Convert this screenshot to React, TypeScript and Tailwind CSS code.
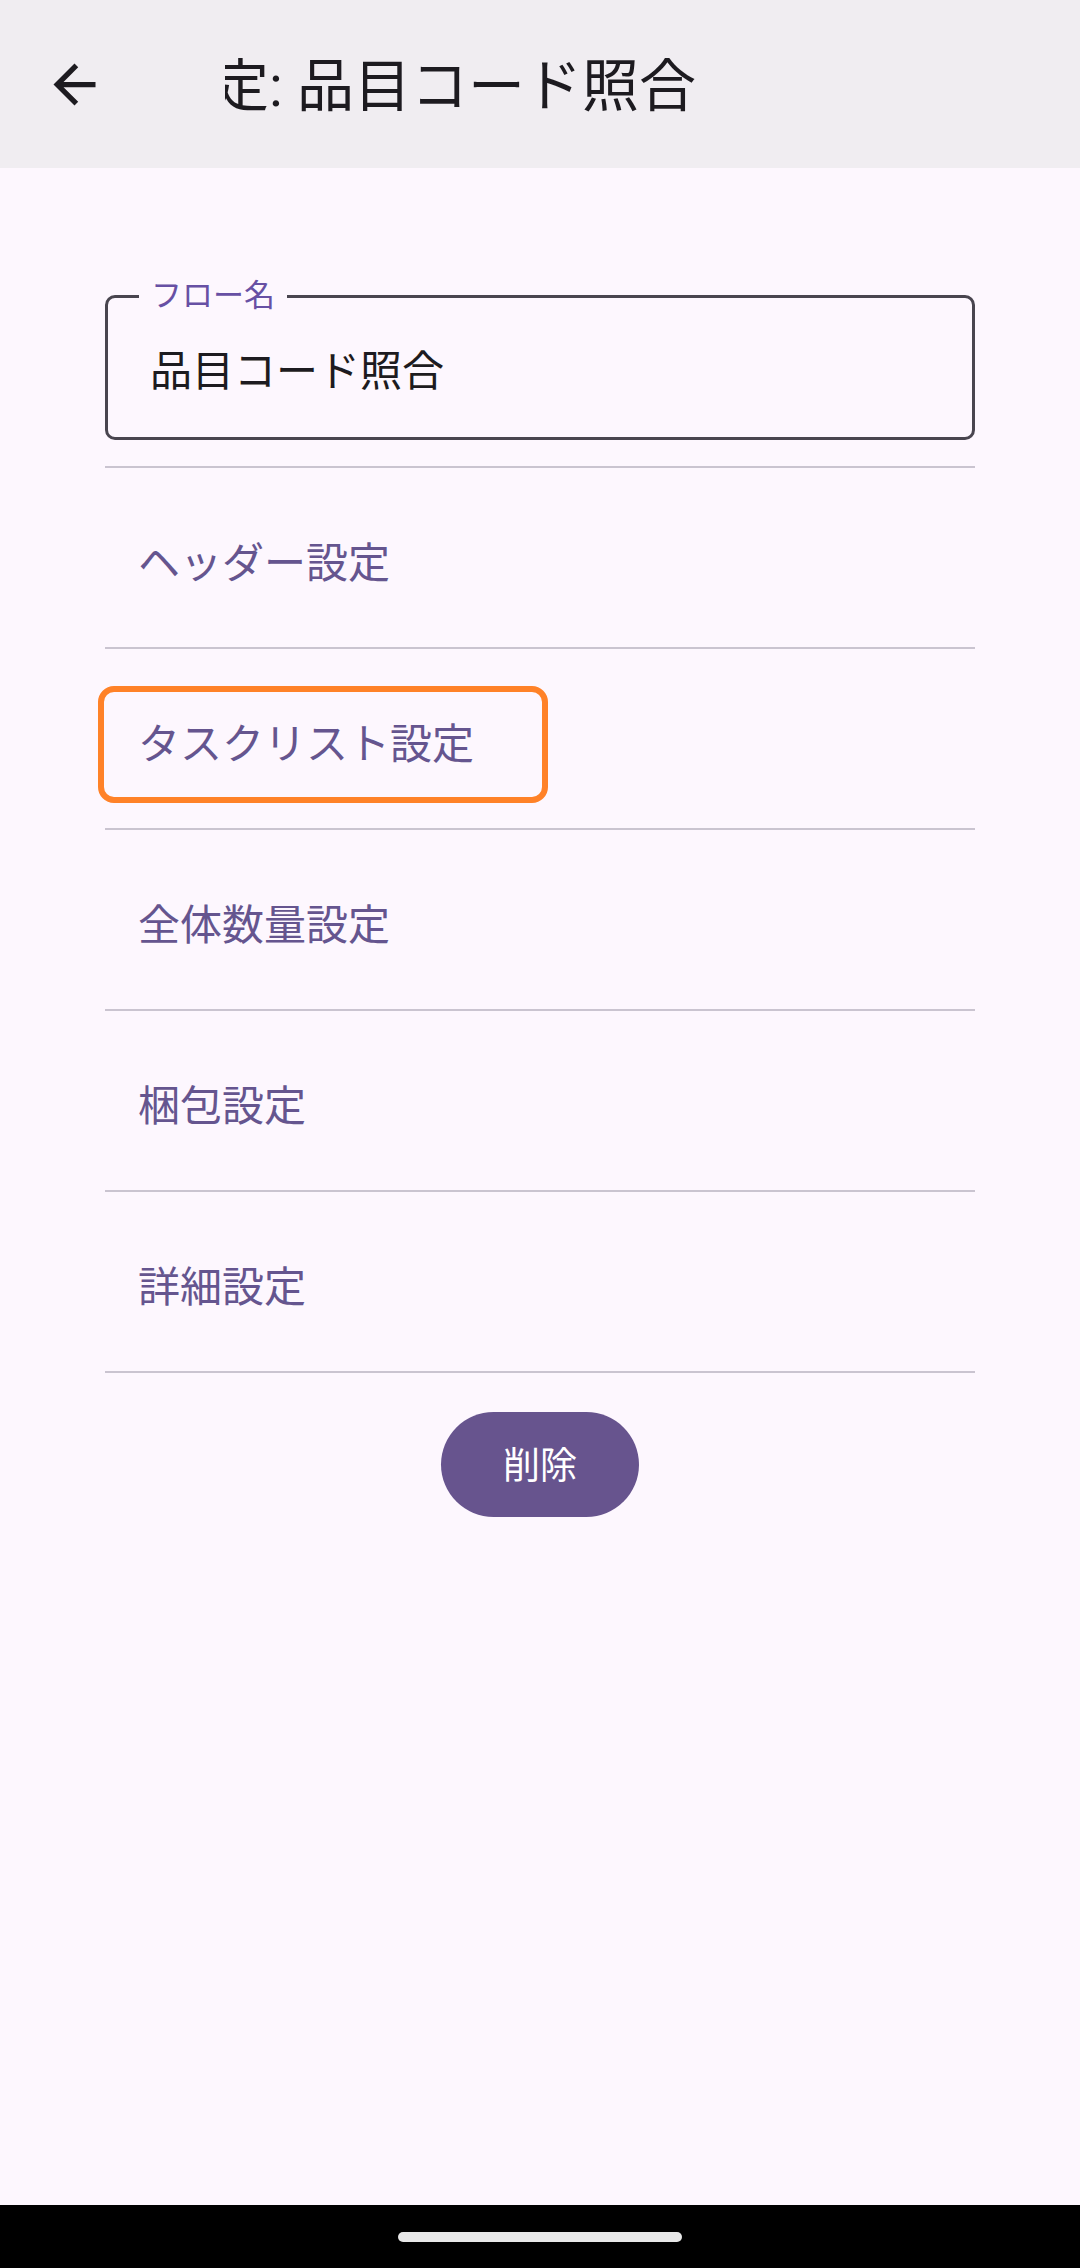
import React from "react";

const font = { fontFamily: "Roboto, 'Noto Sans CJK JP', 'Noto Sans', sans-serif" };

const rows = ["ヘッダー設定", "タスクリスト設定", "全体数量設定", "梱包設定", "詳細設定"];

const Divider = () => <div className="h-[2px] w-full bg-[#cac4d0]" />;

export default function App() {
  return (
    <div className="w-[1080px] h-[2268px] flex flex-col bg-[#fdf7fe] overflow-hidden" style={font}>
      {/* top app bar */}
      <header className="h-[168px] shrink-0 bg-[#f0edf1] flex items-center">
        <button className="ml-[43px] w-[63px] h-[63px] flex items-center justify-center text-[#1d1b20]">
          <svg viewBox="0 0 24 24" className="w-[63px] h-[63px]" fill="currentColor">
            <path d="M20 11H7.83l5.59-5.59L12 4l-8 8 8 8 1.41-1.41L7.83 13H20v-2z" />
          </svg>
        </button>
        <div className="ml-[119px] w-[760px] overflow-hidden pt-[6px]">
          <div className="-ml-[70px] whitespace-nowrap text-[57px] leading-[68px] text-[#1d1b20]">
            設定: 品目コード照合
          </div>
        </div>
      </header>

      <main className="flex-1 flex flex-col px-[105px] pt-[127px]">
        {/* outlined text field */}
        <div className="relative h-[145px] border-[3px] border-[#49454f] rounded-[10px] flex items-center pl-[42px] pt-[8px]">
          <span className="absolute -top-[19px] left-[31px] px-[12px] bg-[#fdf7fe] text-[31px] leading-[34px] text-[#6750a4]">
            フロー名
          </span>
          <span className="text-[42px] leading-none text-[#1d1b20]">品目コード照合</span>
        </div>

        <div className="mt-[26px]">
          <Divider />
        </div>

        {rows.map((label, i) => (
          <React.Fragment key={label}>
            <div className="relative h-[179px] flex items-center pl-[33px] pt-[12px]">
              {i === 1 && (
                <div className="absolute left-[-7px] top-[37px] w-[450px] h-[117px] border-[6px] border-[#ff8228] rounded-[16px]" />
              )}
              <span className="text-[42px] leading-none text-[#65558f]">{label}</span>
            </div>
            <Divider />
          </React.Fragment>
        ))}

        <button className="mt-[39px] self-center w-[198px] h-[105px] rounded-full bg-[#67548e] text-white text-[37px] leading-none flex items-center justify-center pt-[4px]">
          削除
        </button>
      </main>

      {/* system navigation bar */}
      <footer className="h-[63px] shrink-0 bg-black flex justify-center pt-[27px]">
        <div className="w-[284px] h-[10px] rounded-full bg-[#e8e8e8]" />
      </footer>
    </div>
  );
}
